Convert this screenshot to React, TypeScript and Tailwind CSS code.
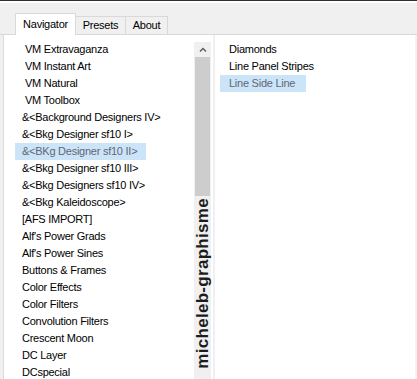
import React from 'react'

const leftItems = [
  { label: 'VM Extravaganza', indent: true },
  { label: 'VM Instant Art', indent: true },
  { label: 'VM Natural', indent: true },
  { label: 'VM Toolbox', indent: true },
  { label: '&<Background Designers IV>' },
  { label: '&<Bkg Designer sf10 I>' },
  { label: '&<BKg Designer sf10 II>', selected: true },
  { label: '&<Bkg Designer sf10 III>' },
  { label: '&<Bkg Designers sf10 IV>' },
  { label: '&<Bkg Kaleidoscope>' },
  { label: '[AFS IMPORT]' },
  { label: "Alf's Power Grads" },
  { label: "Alf's Power Sines" },
  { label: 'Buttons & Frames' },
  { label: 'Color Effects' },
  { label: 'Color Filters' },
  { label: 'Convolution Filters' },
  { label: 'Crescent Moon' },
  { label: 'DC Layer' },
  { label: 'DCspecial' },
]

const rightItems = [
  { label: 'Diamonds' },
  { label: 'Line Panel Stripes' },
  { label: 'Line Side Line', selected: true },
]

function Tab({ label, active, width }: { label: string; active?: boolean; width: string }) {
  if (active) {
    return (
      <div
        className={`${width} h-[22px] -mb-px flex items-center justify-center bg-white border border-b-0 border-[#d9d9d9] text-black`}
      >
        {label}
      </div>
    )
  }
  return (
    <div
      className={`${width} h-[18px] flex items-center justify-center bg-[#f0f0f0] border border-b-0 border-l-0 border-[#d9d9d9] text-black`}
    >
      {label}
    </div>
  )
}

export default function App() {
  return (
    <div
      className="w-[417px] h-[379px] overflow-hidden bg-white flex flex-col text-[11px] tracking-[-0.25px] text-black"
      style={{ fontFamily: '"Liberation Sans", Arial, sans-serif' }}
    >
      {/* window edge */}
      <div className="h-px bg-[#2e2e2e]" />
      <div className="h-[2px] bg-white" />

      {/* tab strip */}
      <div className="h-[32px] bg-[#f0f0f0] border-b border-[#d9d9d9] flex items-end pl-[15px]">
        <Tab label="Navigator" active width="w-[61px]" />
        <Tab label="Presets" width="w-[50px]" />
        <Tab label="About" width="w-[42px]" />
      </div>

      {/* panel body */}
      <div className="flex-1 flex min-h-0">
        <div className="w-[4px] bg-[#f0f0f0] border-r border-[#dcdcdc]" />

        {/* left list */}
        <div className="w-[190px] pt-[6px] pl-[11px] flex flex-col">
          {leftItems.map((item) => (
            <div key={item.label} className="h-[17px] flex items-center">
              <span
                className={
                  item.selected
                    ? 'h-[17px] flex items-center pl-[7px] pr-[9px] bg-[#cce4f7] text-[#5d6878]'
                    : `h-[17px] flex items-center pr-[9px] ${item.indent ? 'pl-[10px]' : 'pl-[7px]'}`
                }
              >
                {item.label}
              </span>
            </div>
          ))}
        </div>

        {/* scrollbar with vertical caption */}
        <div className="w-[17px] mt-[7px] bg-[#f0f0f0] flex flex-col items-center">
          <div className="h-[15px] w-full flex items-center justify-center">
            <svg width="8" height="5" viewBox="0 0 8 5">
              <path d="M1 4.5 L4 1.5 L7 4.5" fill="none" stroke="#606060" strokeWidth="1.5" />
            </svg>
          </div>
          <div className="h-[139px] w-[15px] bg-[#cdcdcd]" />
          <div className="flex-1 flex flex-col justify-end pb-[10px]">
            <div
              className="[writing-mode:vertical-rl] rotate-180 font-bold text-[17px] tracking-[0.3px] leading-[17px] text-[#1c1c1c]"
              style={{ fontFamily: '"Liberation Sans", Arial, sans-serif' }}
            >
              micheleb-graphisme
            </div>
          </div>
        </div>

        <div className="w-[2px] bg-white" />
        <div className="w-[2px] bg-[#f0f0f0]" />

        {/* right list */}
        <div className="flex-1 pt-[6px] pl-[5px] flex flex-col border-r-2 border-[#f3f3f3]">
          {rightItems.map((item) => (
            <div key={item.label} className="h-[17px] flex items-center">
              <span
                className={
                  item.selected
                    ? 'h-[17px] flex items-center pl-[9px] pr-[11px] bg-[#cce4f7] text-[#5d6878]'
                    : 'h-[17px] flex items-center pl-[9px] pr-[11px]'
                }
              >
                {item.label}
              </span>
            </div>
          ))}
        </div>
      </div>
    </div>
  )
}
